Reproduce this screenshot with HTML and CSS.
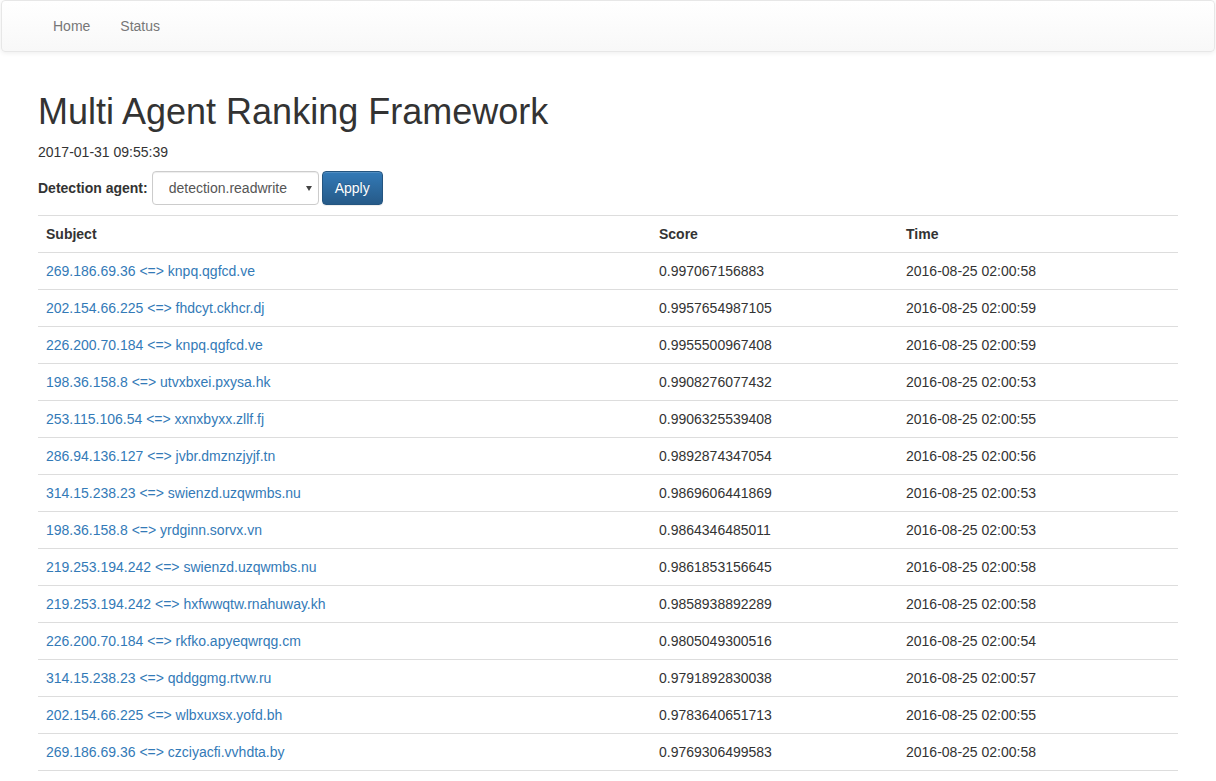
FILE: index.html
```html
<!DOCTYPE html>
<html>
<head>
<meta charset="utf-8">
<title>Multi Agent Ranking Framework</title>
<link rel="stylesheet" href="styles.css">
</head>
<body>
<nav class="navbar">
  <div class="container">
    <ul class="nav">
      <li><a href="#">Home</a></li>
      <li><a href="#">Status</a></li>
    </ul>
  </div>
</nav>
<div class="container main">
  <h1>Multi Agent Ranking Framework</h1>
  <p class="date">2017-01-31 09:55:39</p>
  <form class="filter">
    <label for="agent">Detection agent:</label>
    <span class="select-wrap">
      <select id="agent" class="form-control">
        <option>detection.readwrite</option>
      </select>
    </span>
    <button type="button" class="btn">Apply</button>
  </form>
  <table class="table">
    <thead>
      <tr><th class="c-subj">Subject</th><th class="c-score">Score</th><th class="c-time">Time</th></tr>
    </thead>
    <tbody>
      <tr><td><a href="#">269.186.69.36 &lt;=&gt; knpq.qgfcd.ve</a></td><td>0.997067156883</td><td>2016-08-25 02:00:58</td></tr>
      <tr><td><a href="#">202.154.66.225 &lt;=&gt; fhdcyt.ckhcr.dj</a></td><td>0.9957654987105</td><td>2016-08-25 02:00:59</td></tr>
      <tr><td><a href="#">226.200.70.184 &lt;=&gt; knpq.qgfcd.ve</a></td><td>0.9955500967408</td><td>2016-08-25 02:00:59</td></tr>
      <tr><td><a href="#">198.36.158.8 &lt;=&gt; utvxbxei.pxysa.hk</a></td><td>0.9908276077432</td><td>2016-08-25 02:00:53</td></tr>
      <tr><td><a href="#">253.115.106.54 &lt;=&gt; xxnxbyxx.zllf.fj</a></td><td>0.9906325539408</td><td>2016-08-25 02:00:55</td></tr>
      <tr><td><a href="#">286.94.136.127 &lt;=&gt; jvbr.dmznzjyjf.tn</a></td><td>0.9892874347054</td><td>2016-08-25 02:00:56</td></tr>
      <tr><td><a href="#">314.15.238.23 &lt;=&gt; swienzd.uzqwmbs.nu</a></td><td>0.9869606441869</td><td>2016-08-25 02:00:53</td></tr>
      <tr><td><a href="#">198.36.158.8 &lt;=&gt; yrdginn.sorvx.vn</a></td><td>0.9864346485011</td><td>2016-08-25 02:00:53</td></tr>
      <tr><td><a href="#">219.253.194.242 &lt;=&gt; swienzd.uzqwmbs.nu</a></td><td>0.9861853156645</td><td>2016-08-25 02:00:58</td></tr>
      <tr><td><a href="#">219.253.194.242 &lt;=&gt; hxfwwqtw.rnahuway.kh</a></td><td>0.9858938892289</td><td>2016-08-25 02:00:58</td></tr>
      <tr><td><a href="#">226.200.70.184 &lt;=&gt; rkfko.apyeqwrqg.cm</a></td><td>0.9805049300516</td><td>2016-08-25 02:00:54</td></tr>
      <tr><td><a href="#">314.15.238.23 &lt;=&gt; qddggmg.rtvw.ru</a></td><td>0.9791892830038</td><td>2016-08-25 02:00:57</td></tr>
      <tr><td><a href="#">202.154.66.225 &lt;=&gt; wlbxuxsx.yofd.bh</a></td><td>0.9783640651713</td><td>2016-08-25 02:00:55</td></tr>
      <tr><td><a href="#">269.186.69.36 &lt;=&gt; czciyacfi.vvhdta.by</a></td><td>0.9769306499583</td><td>2016-08-25 02:00:58</td></tr>
    </tbody>
  </table>
</div>
</body>
</html>
```

FILE: styles.css
```css
* { box-sizing: border-box; }
html, body { margin: 0; padding: 0; }
body {
  font-family: "Liberation Sans", Arial, Helvetica, sans-serif;
  font-size: 14px;
  line-height: 1.42857143;
  color: #333;
  background: #fff;
}
a { color: #337ab7; text-decoration: none; }

.container {
  width: 1170px;
  margin: 0 auto;
  padding: 0 15px;
}
.main { display: flow-root; }

.navbar {
  min-height: 50px;
  margin: 0 1px 20px 1px;
  border: 1px solid #e7e7e7;
  border-radius: 4px;
  background: linear-gradient(to bottom, #fff 0, #f8f8f8 100%);
  box-shadow: inset 0 1px 0 rgba(255,255,255,.15), 0 1px 5px rgba(0,0,0,.075);
}
.nav {
  list-style: none;
  margin: 0;
  padding: 0;
  display: flex;
}
.nav a {
  display: block;
  padding: 15px;
  line-height: 20px;
  color: #777;
  text-shadow: 0 1px 0 rgba(255,255,255,.25);
}

h1 {
  font-size: 36px;
  font-weight: 500;
  line-height: 1.1;
  margin: 20px 0 10px;
}
.date { margin: 0 0 9px; }

.filter {
  margin: 0 0 10px;
  display: flex;
  align-items: center;
}
.filter label {
  font-weight: bold;
  margin-right: 4px;
}
.select-wrap {
  position: relative;
  display: block;
}
.select-wrap::after {
  content: "";
  position: absolute;
  left: 154px;
  top: 15px;
  border-left: 3px solid transparent;
  border-right: 3px solid transparent;
  border-top: 5px solid #444;
  pointer-events: none;
}
.form-control {
  display: block;
  width: 167px;
  height: 34px;
  padding: 6px 12px 6px 16px;
  font-family: inherit;
  font-size: 14px;
  color: #555;
  background: #fff;
  border: 1px solid #ccc;
  border-radius: 4px;
  box-shadow: inset 0 1px 1px rgba(0,0,0,.075);
  appearance: none;
  -webkit-appearance: none;
}
.btn {
  margin-left: 3px;
  height: 34px;
  padding: 6px 12px;
  font-family: inherit;
  font-size: 14px;
  line-height: 1.42857143;
  color: #fff;
  border: 1px solid #245580;
  border-radius: 4px;
  background: linear-gradient(to bottom, #337ab7 0, #265a88 100%);
  text-shadow: 0 -1px 0 rgba(0,0,0,.2);
  box-shadow: inset 0 1px 0 rgba(255,255,255,.15), 0 1px 1px rgba(0,0,0,.075);
}

.table {
  width: 100%;
  border-collapse: collapse;
  border-spacing: 0;
  margin-bottom: 20px;
}
.table th, .table td {
  padding: 8px;
  line-height: 20px;
  text-align: left;
  vertical-align: top;
  border-top: 1px solid #ddd;
}
.table th { vertical-align: bottom; }
.table thead tr th { border-bottom: 1px solid #ddd; }
.table tbody tr:last-child td { border-bottom: 1px solid #ddd; }
.c-subj { width: 613px; }
.c-score { width: 247px; }
.c-time { width: 280px; }
```
